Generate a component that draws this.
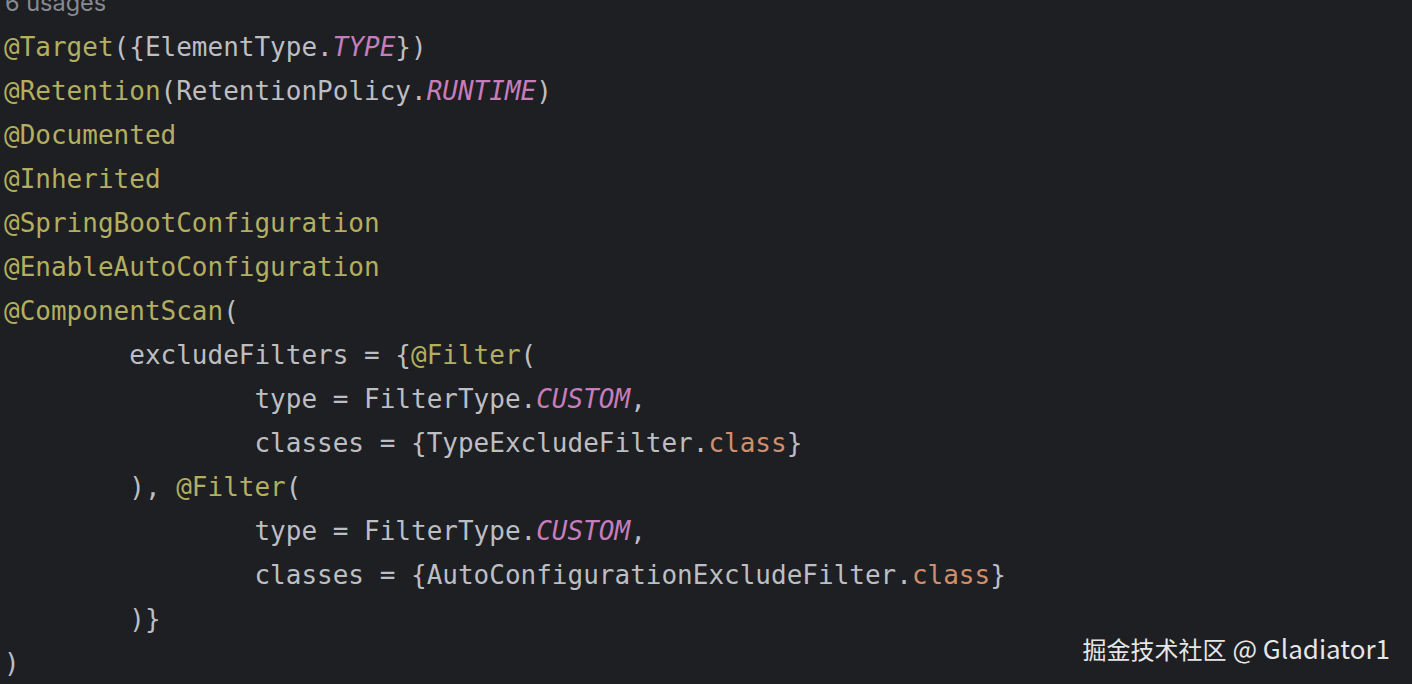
const ann = 'text-[#b3ae60]';
const cst = 'text-[#c77dbb] italic';
const kw = 'text-[#cf8e6d]';

type Seg = [string, string?];

const lines: Seg[][] = [
  [['@Target', ann], ['({ElementType.'], ['TYPE', cst], ['})']],
  [['@Retention', ann], ['(RetentionPolicy.'], ['RUNTIME', cst], [')']],
  [['@Documented', ann]],
  [['@Inherited', ann]],
  [['@SpringBootConfiguration', ann]],
  [['@EnableAutoConfiguration', ann]],
  [['@ComponentScan', ann], ['(']],
  [['        excludeFilters = {'], ['@Filter', ann], ['(']],
  [['                type = FilterType.'], ['CUSTOM', cst], [',']],
  [['                classes = {TypeExcludeFilter.'], ['class', kw], ['}']],
  [['        ), '], ['@Filter', ann], ['(']],
  [['                type = FilterType.'], ['CUSTOM', cst], [',']],
  [['                classes = {AutoConfigurationExcludeFilter.'], ['class', kw], ['}']],
  [['        )}']],
  [[')']],
];

export default function App() {
  return (
    <div className="relative h-[684px] w-[1412px] overflow-hidden bg-[#1e1f22]">
      <div className="h-[25px] overflow-hidden pl-[5px]">
        <div className="-mt-[10px] text-[23.5px] leading-[26px] text-[#868a91] [font-family:'Inter','Noto_Sans',sans-serif]">
          6 usages
        </div>
      </div>
      <div className="pl-[4px] text-[26px] text-[#bcbec4] [font-family:'DejaVu_Sans_Mono',monospace]">
        {lines.map((line, i) => (
          <div key={i} className="h-[44px] whitespace-pre leading-[44px]">
            {line.map(([t, c], j) => (
              <span key={j} className={c}>
                {t}
              </span>
            ))}
          </div>
        ))}
      </div>
      <div className="absolute right-[22px] top-[634px] text-[24px] leading-[28px] text-[#e6e6e6] [font-family:'Noto_Sans_CJK_SC','Noto_Sans',sans-serif]">
        掘金技术社区<span className="text-[26px]"> @ Gladiator1</span>
      </div>
    </div>
  );
}
